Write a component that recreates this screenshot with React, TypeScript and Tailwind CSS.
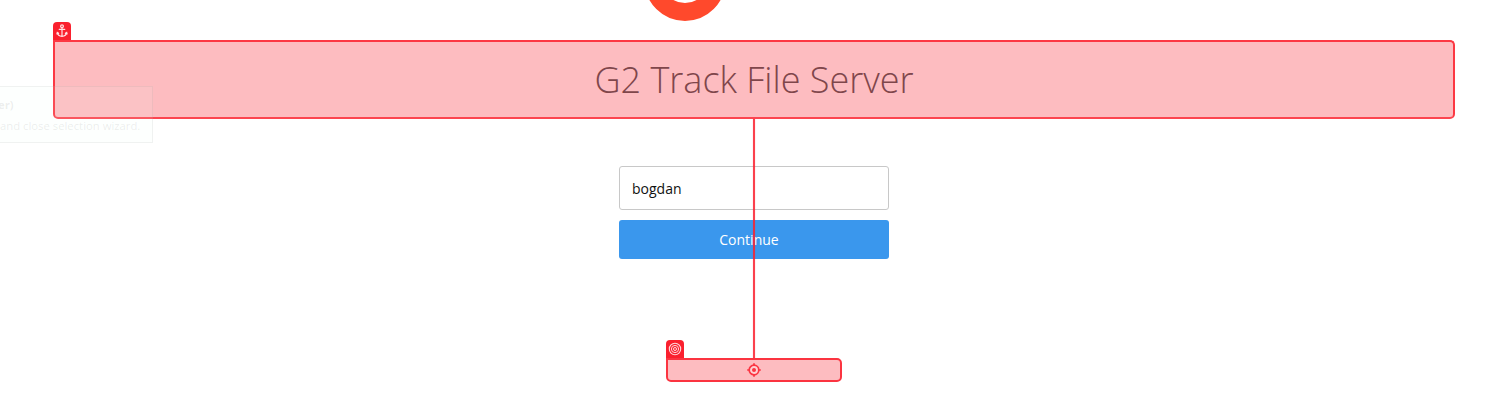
import React from "react";

function Logo() {
  return (
    <svg className="ml-[644px] block h-[22px] w-[82px] shrink-0" viewBox="0 0 82 22">
      <circle cx="41" cy="-19.7" r="31.7" fill="none" stroke="#ff492c" strokeWidth="17.8" />
    </svg>
  );
}

function AnchorIcon() {
  return (
    <svg className="h-[14px] w-[12px]" viewBox="0 0 12 14" fill="none" stroke="#ffe1e3" strokeWidth="1.2" strokeLinecap="round">
      <circle cx="6" cy="2.2" r="1.4" />
      <path d="M6 3.7V12M3.2 5.3H8.8M1.3 8.6C1.7 11 3.5 12.1 6 12.4C8.5 12.1 10.3 11 10.7 8.6M0.9 9.9L1.3 8.4L2.6 9.3M11.1 9.9L10.7 8.4L9.4 9.3" />
    </svg>
  );
}

function TargetIcon() {
  return (
    <svg className="h-[14px] w-[14px]" viewBox="0 0 14 14" fill="none" stroke="#ffd6d9">
      <circle cx="7" cy="7" r="5.7" strokeWidth="1.1" />
      <circle cx="7" cy="7" r="3.6" strokeWidth="1" />
      <circle cx="7" cy="7" r="1.5" strokeWidth="1" />
    </svg>
  );
}

function CrosshairIcon() {
  return (
    <svg className="h-[14px] w-[14px]" viewBox="0 0 14 14" fill="none" stroke="#fb3542" strokeWidth="1.7">
      <circle cx="7" cy="7" r="4.8" fill="#ffd0d3" />
      <path d="M7 0.2V2.7M7 11.3V13.8M0.2 7H2.7M11.3 7H13.8" />
      <circle cx="7" cy="7" r="2" fill="#fb3542" stroke="none" />
    </svg>
  );
}

export default function App() {
  return (
    <main className="relative flex h-[402px] w-[1508px] flex-col overflow-hidden bg-white font-['Open_Sans',sans-serif]">
      <Logo />
      <section className="ml-[53px] w-[1402px]">
        <div className="flex h-[18px] w-[18px] items-center justify-center rounded-t-[4px] bg-[#fa202e]">
          <AnchorIcon />
        </div>
        <div className="flex h-[79px] items-center justify-center rounded-[5px] rounded-tl-none border-2 border-[#fc3843] border-b-[#fc4550] bg-[#fdbcc0]">
          <h1 className="w-[319px] whitespace-nowrap text-[36px] font-light leading-[48px] text-[#7f464b]">G2 Track File Server</h1>
        </div>
      </section>

      <form className="ml-[619px] mt-[47px] flex w-[270px] flex-col gap-[10px]" onSubmit={(e) => e.preventDefault()}>
        <input
          className="h-[44px] rounded-[3px] border border-[#c8c8c8] bg-white px-3 text-[14px] text-[#111] outline-none"
          defaultValue="bogdan"
          aria-label="Username"
        />
        <button className="h-[39px] rounded-[3px] bg-[#3a97ed] pr-[10px] text-[14px] text-white">Continue</button>
      </form>

      <section className="ml-[666px] mt-[81px] w-[176px]">
        <div className="flex h-[18px] w-[18px] items-center justify-center rounded-t-[4px] bg-[#fa202e]">
          <TargetIcon />
        </div>
        <div className="flex h-[24px] items-center justify-center rounded-[5px] rounded-tl-none border-2 border-[#fb3440] bg-[#fdbcc0]">
          <CrosshairIcon />
        </div>
      </section>

      <div className="absolute left-[753px] top-[119px] h-[239px] w-[2px] bg-[#fa202e]/85 shadow-[0_0_1px_#fa202e80]" />

      <aside className="absolute left-0 top-[86px] h-[57px] w-[153px] border border-l-0 border-[#808080]/10 bg-[#f0fcfa]/10 text-[11.3px] text-[#808080]/15">
        <p className="-ml-[2px] mt-[9px] leading-[18px] font-bold">er)</p>
        <p className="mt-[3px] whitespace-nowrap leading-[18px]">and close selection wizard.</p>
      </aside>
    </main>
  );
}
